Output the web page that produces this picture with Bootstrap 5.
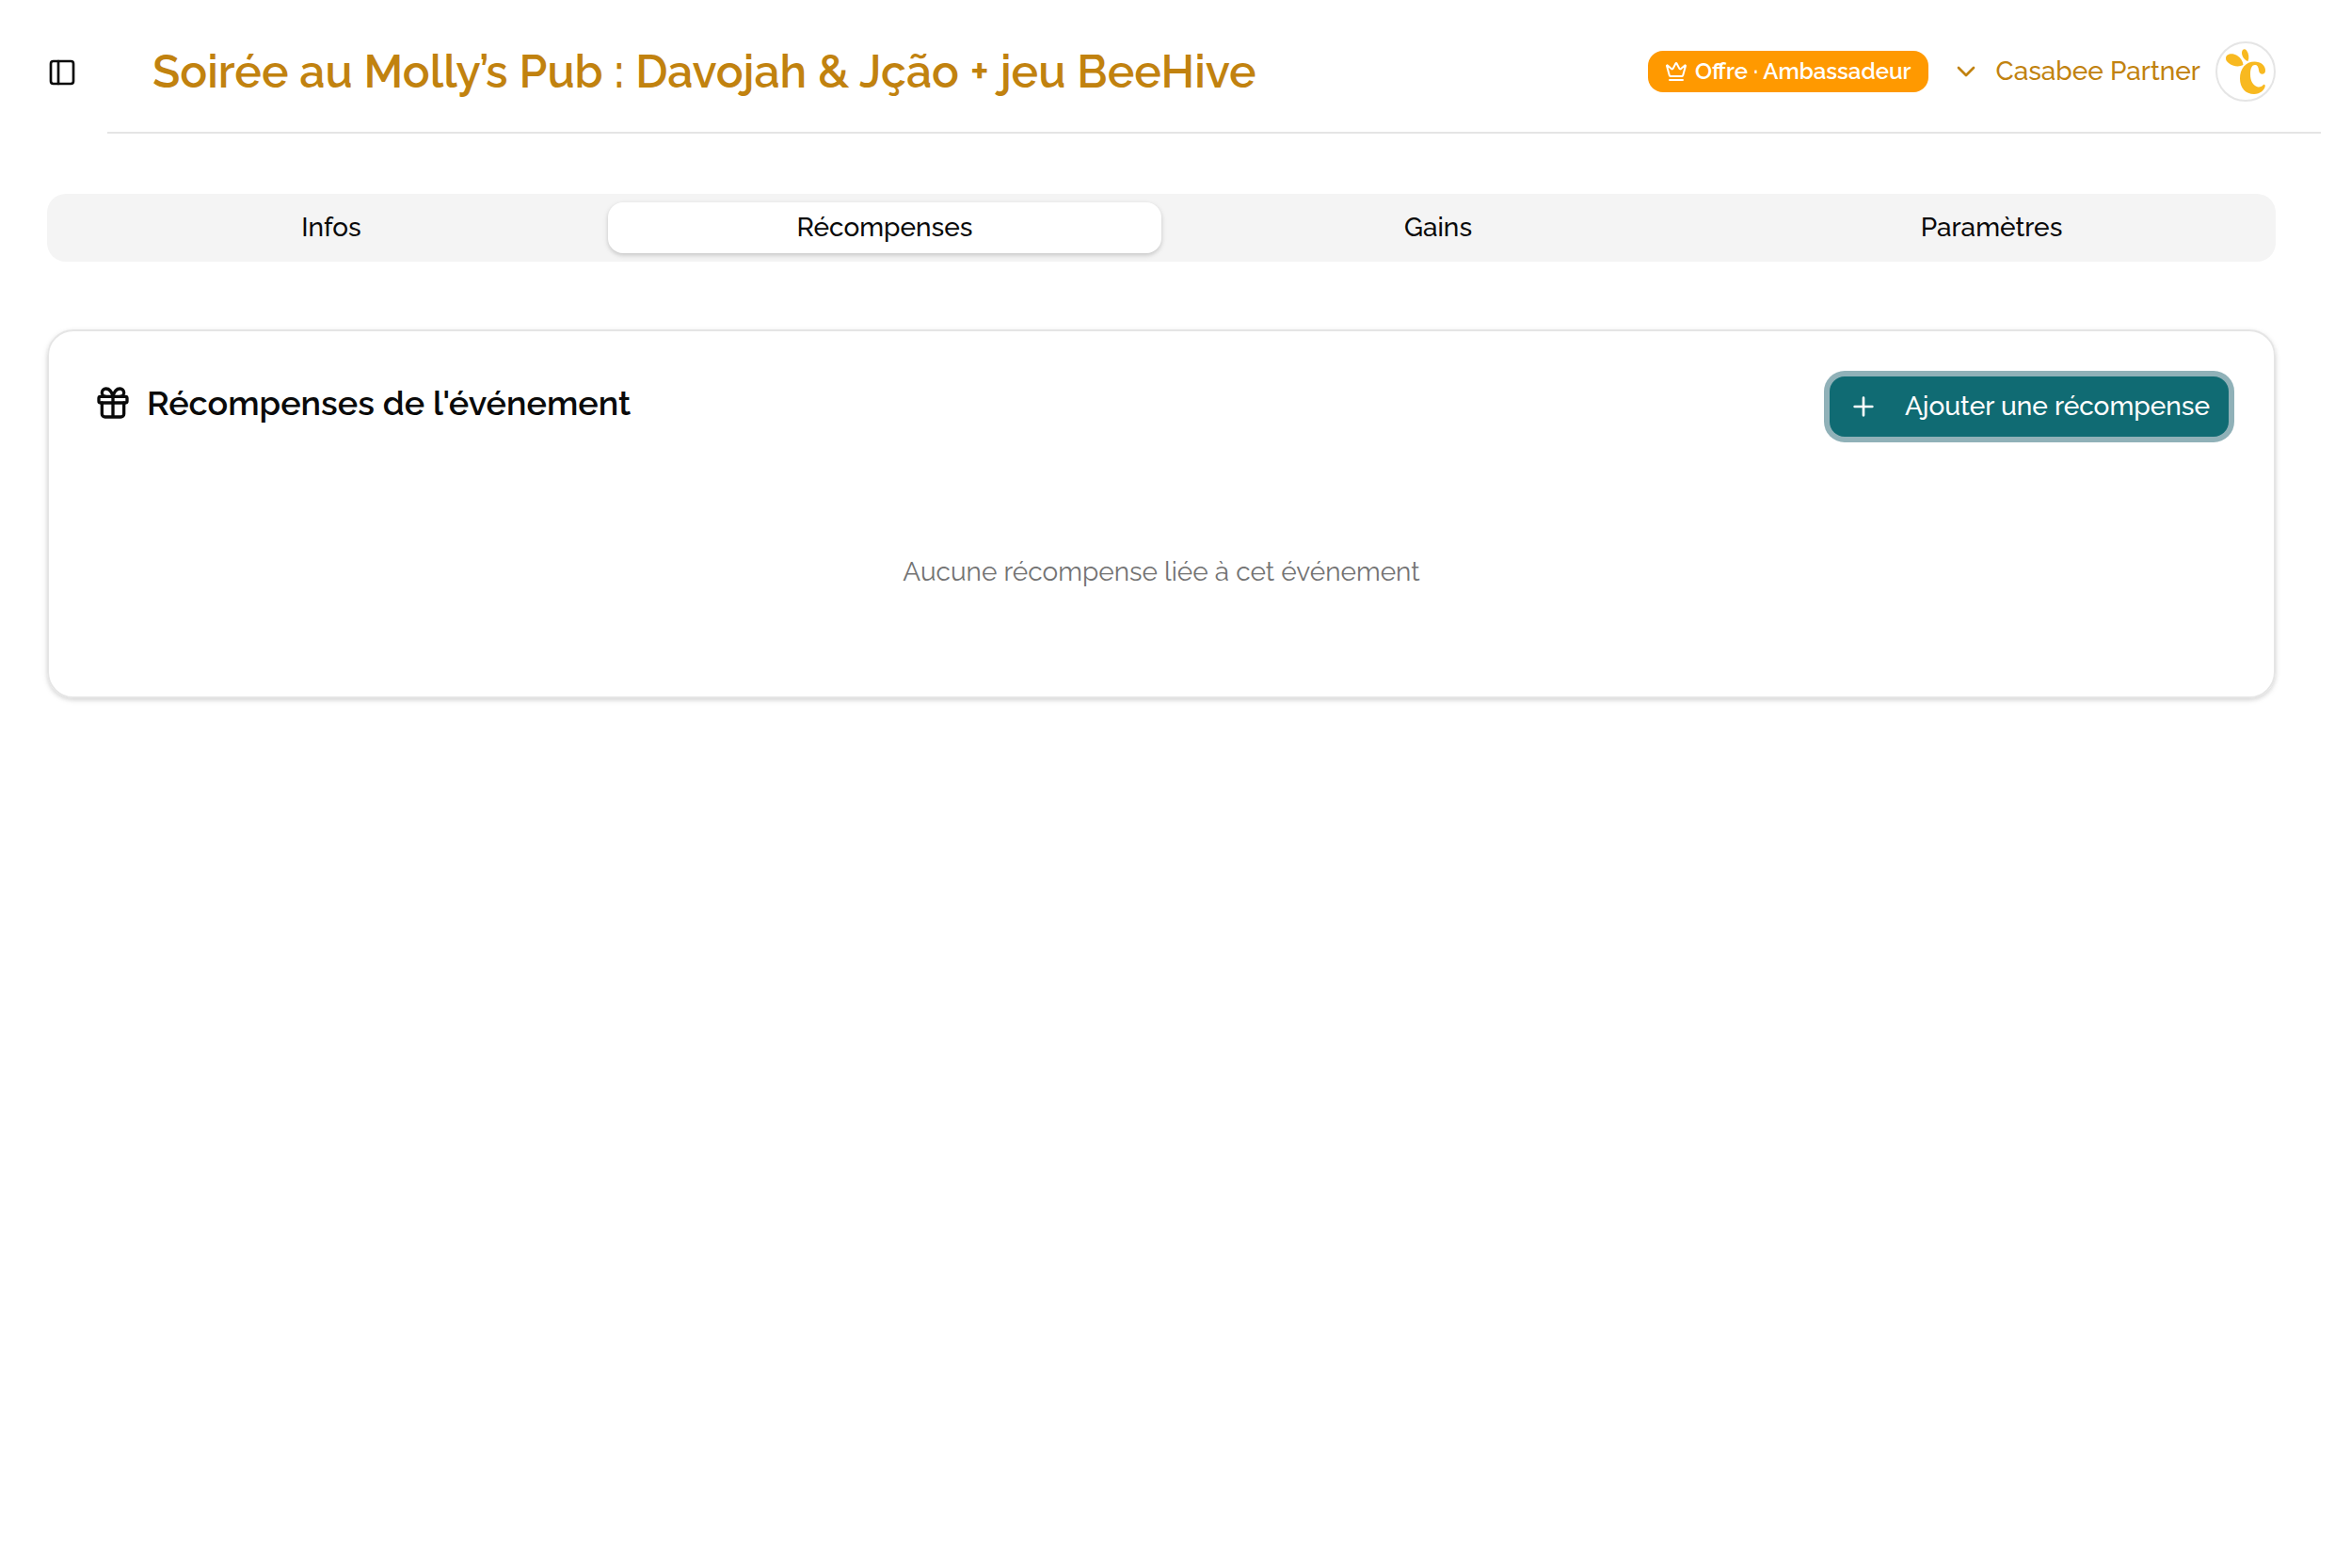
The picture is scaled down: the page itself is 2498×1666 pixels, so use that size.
<!DOCTYPE html>
<html lang="fr">
<head>
<meta charset="utf-8">
<meta name="viewport" content="width=device-width, initial-scale=1">
<title>Soirée au Molly’s Pub</title>
<link href="https://cdn.jsdelivr.net/npm/bootstrap@5.3.0/dist/css/bootstrap.min.css" rel="stylesheet">
<style>
  body { font-family: Raleway, Lato, "Open Sans", sans-serif; font-size: 28px; line-height: 40px; color: #0a0a0a; background: #fff; }
  svg { display: block; flex: none; fill: none; stroke: currentColor; stroke-width: 2; stroke-linecap: round; stroke-linejoin: round; }
  .topbar { padding-left: 50px; }
  .toggle-btn { margin-top: 61px; color: #0a0a0a; }
  .topbar-main { margin: 0 32px; padding: 44px 48px 32px; border-bottom: 2px solid #e5e5e5; }
  .page-title { font-size: 48px; line-height: 64px; font-weight: 600; color: #c1820f; }
  .offer-tag { font-size: 24px; line-height: 28px; font-weight: 600; padding: 8px 18px; border-radius: 16px; background: #ff9900; gap: 8px; }
  .account { color: #c1820f; font-weight: 500; gap: 16px; margin-left: 24px; }
  .account:hover { color: #c1820f; }
  .avatar { width: 64px; height: 64px; border: 2px solid #e5e5e5; border-radius: 50%; }
  .avatar svg { margin: -2px; fill: #f8b920; stroke: none; }
  .page-body { padding: 64px 80px 64px 50px; }
  .tab-strip { padding: 9px 8px; border-radius: 20px; background: #f4f4f4; }
  .tab-strip .nav-link { padding: 7px 16px; border-radius: 16px; color: #0a0a0a; font-weight: 500; }
  .tab-strip .nav-link.active { color: #0a0a0a; background: #fff; box-shadow: 0 2px 6px rgba(0,0,0,.1), 0 2px 4px rgba(0,0,0,.1); }
  .rewards { margin-top: 72px; min-height: 392px; padding: 48px; border: 2px solid #e5e5e5; border-radius: 28px; box-shadow: 0 2px 6px rgba(0,0,0,.1), 0 2px 4px rgba(0,0,0,.08); }
  .rewards-title { font-size: 36px; line-height: 40px; font-weight: 600; gap: 16px; padding-top: 8px; }
  .btn-add { font-size: 28px; font-weight: 500; line-height: 40px; padding: 12px 20px; gap: 28px; border: 0; border-radius: 16px; color: #fff; background: #106b73; box-shadow: 0 0 0 6px #90b1b8; }
  .btn-add:hover { color: #fff; background: #0d5a61; }
  .empty-note { color: #737373; padding-top: 124px; }
</style>
</head>
<body>
<header class="topbar d-flex align-items-start">
  <button type="button" class="toggle-btn btn p-0 border-0" aria-label="Afficher le menu">
    <svg width="32" height="32" viewBox="0 0 24 24"><rect x="3" y="3" width="18" height="18" rx="2"/><path d="M9 3v18"/></svg>
  </button>
  <div class="topbar-main flex-grow-1 d-flex align-items-center justify-content-between">
    <h1 class="page-title m-0">Soirée au Molly’s Pub : Davojah &amp; Jção + jeu BeeHive</h1>
    <div class="d-flex align-items-center">
      <span class="offer-tag d-flex align-items-center text-white">
        <svg width="24" height="24" viewBox="0 0 24 24"><path d="M11.562 3.266a.5.5 0 0 1 .876 0L15.390 8.870a1 1 0 0 0 1.516.294L21.183 5.500a.5.5 0 0 1 .798.519l-2.834 10.246a1 1 0 0 1-.956.734H5.810a1 1 0 0 1-.957-.734L2.020 6.020a.5.5 0 0 1 .798-.519l4.276 3.664a1 1 0 0 0 1.516-.294zM5 21h14"/></svg>
        Offre · Ambassadeur
      </span>
      <a href="#" class="account d-flex align-items-center text-decoration-none">
        <svg width="32" height="32" viewBox="0 0 24 24"><path d="m6 9 6 6 6-6"/></svg>
        <span>Casabee Partner</span>
        <span class="avatar">
          <svg width="64" height="64" viewBox="0 0 64 64">
            <path d="M11 18C11 13 18 12 23 15C27 17.500 29 21 29.500 25C25 27.500 18 26.500 14 23C12 21.500 11 20 11 18Z"/>
            <path d="M28 12C28 8.500 31 7 33 9.500C35.500 13 36 17.500 34.500 21C31.500 20.500 28 16.500 28 12Z"/>
            <path d="M53 31.500C53.500 25.500 48 21.500 41.500 21.500C32 21.500 26 29 26 39.500C26 49.500 32 56 41 56C47.500 56 52.500 51.500 52.800 47C52.500 45.500 51 45.500 50.300 46.800C48.500 48.300 46.500 48.800 44.500 48.200C40 47 37 42 37 35C37 28 39 25 42 25C44.500 25 45.700 27 46 30.500C46.500 36 52.500 36 53 31.500Z"/>
          </svg>
        </span>
      </a>
    </div>
  </div>
</header>
<main class="page-body">
  <nav class="tab-strip nav nav-pills nav-fill">
    <a class="nav-link flex-fill w-25" href="#">Infos</a>
    <a class="nav-link flex-fill w-25 active" aria-current="page" href="#">Récompenses</a>
    <a class="nav-link flex-fill w-25" href="#">Gains</a>
    <a class="nav-link flex-fill w-25" href="#">Paramètres</a>
  </nav>
  <section class="rewards">
    <div class="d-flex align-items-start justify-content-between">
      <h2 class="rewards-title d-flex align-items-center m-0">
        <svg width="40" height="40" viewBox="0 0 24 24"><rect x="3" y="8" width="18" height="4" rx="1"/><path d="M12 8v13M19 12v7a2 2 0 0 1-2 2H7a2 2 0 0 1-2-2v-7M7.500 8a2.500 2.500 0 0 1 0-5A4.800 8 0 0 1 12 8a4.800 8 0 0 1 4.500-5 2.500 2.500 0 0 1 0 5"/></svg>
        Récompenses de l'événement
      </h2>
      <button type="button" class="btn btn-add d-flex align-items-center">
        <svg width="32" height="32" viewBox="0 0 24 24"><path d="M5 12h14M12 5v14"/></svg>
        Ajouter une récompense
      </button>
    </div>
    <p class="empty-note text-center m-0">Aucune récompense liée à cet événement</p>
  </section>
</main>
<script src="https://cdn.jsdelivr.net/npm/bootstrap@5.3.0/dist/js/bootstrap.bundle.min.js"></script>
</body>
</html>
